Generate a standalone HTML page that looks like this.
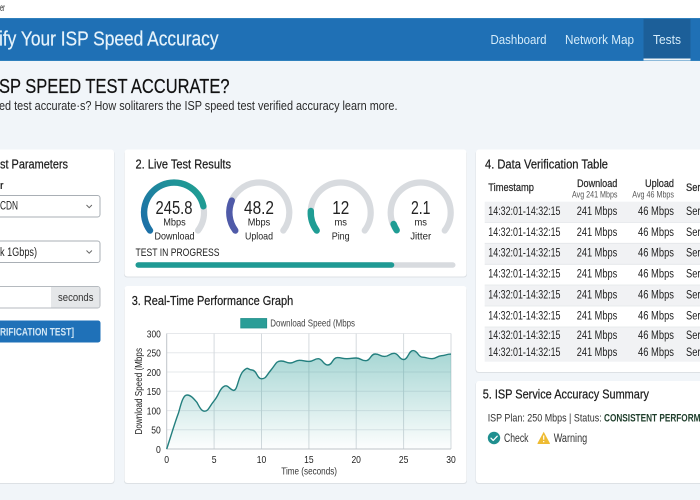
<!DOCTYPE html>
<html lang="en">
<head>
<meta charset="utf-8">
<title>Verify Your ISP Speed Accuracy</title>
<style>
html,body{margin:0;padding:0;background:#f1f5f9;width:700px;height:500px;overflow:hidden}
svg{display:block;position:absolute;left:0;top:0;filter:blur(.3px)}
text{font-family:"Liberation Sans",sans-serif;fill:#222;}
.m{stroke:currentColor;stroke-width:.22px}
</style>
</head>
<body>
<svg width="700" height="500" viewBox="0 0 700 500" xmlns="http://www.w3.org/2000/svg">
<defs>
<linearGradient id="g1" gradientUnits="userSpaceOnUse" x1="144" y1="230" x2="204" y2="195">
<stop offset="0" stop-color="#1c6ea8"/><stop offset=".6" stop-color="#1f8f9a"/><stop offset="1" stop-color="#1f9d92"/>
</linearGradient>
<linearGradient id="area" x1="0" y1="0" x2="0" y2="1">
<stop offset="0" stop-color="#2a9d97" stop-opacity=".42"/><stop offset="1" stop-color="#2a9d97" stop-opacity=".01"/>
</linearGradient>
</defs>
<rect width="700" height="500" fill="#f1f5f9"/>
<rect y="0" width="700" height="18" fill="#fff"/>
<text x="0" y="11" font-size="10.5" textLength="5" lengthAdjust="spacingAndGlyphs">er</text>

<!-- Header -->
<rect y="18" width="700" height="43" fill="#2f80bd"/>
<rect y="19" width="700" height="41" fill="#1f70b5"/>
<rect x="643.5" y="19" width="47" height="40" fill="#1c5f99"/>
<rect x="643.5" y="58.5" width="47" height="2" fill="#eef4f8"/>
<text x="-1" y="45.5" font-size="20" class="m" style="fill:#e6f3fb;color:#e6f3fb" textLength="219.5" lengthAdjust="spacingAndGlyphs">ify Your ISP Speed Accuracy</text>
<text x="490.5" y="44" font-size="13.2" style="fill:#d5ecfa" textLength="56" lengthAdjust="spacingAndGlyphs">Dashboard</text>
<text x="565" y="44" font-size="13.2" style="fill:#d5ecfa" textLength="69" lengthAdjust="spacingAndGlyphs">Network Map</text>
<text x="653" y="44" font-size="13.2" style="fill:#d5ecfa" textLength="28" lengthAdjust="spacingAndGlyphs">Tests</text>

<!-- Heading -->
<text x="-1" y="93" font-size="20" class="m" style="fill:#111;color:#111" textLength="230.5" lengthAdjust="spacingAndGlyphs">SP SPEED TEST ACCURATE?</text>
<text x="-1" y="110" font-size="12.6" style="fill:#2a2a2a" textLength="398.5" lengthAdjust="spacingAndGlyphs">ed test accurate·s? How solitarers the ISP speed test verified accuracy learn more.</text>

<!-- Card shadows -->
<g fill="#dde1e5">
<rect x="-8" y="150.5" width="122.5" height="333.5" rx="3"/>
<rect x="124" y="150.5" width="343" height="127" rx="3"/>
<rect x="124" y="287" width="343" height="197" rx="3"/>
<rect x="475.5" y="150.5" width="240" height="222.5" rx="3"/>
<rect x="475.5" y="381.5" width="240" height="102.5" rx="3"/>
</g>
<g fill="#fff">
<rect x="-8" y="149.5" width="122" height="333.5" rx="3"/>
<rect x="124.5" y="149.5" width="342" height="127" rx="3"/>
<rect x="124.5" y="286" width="342" height="197" rx="3"/>
<rect x="476" y="149.5" width="240" height="222.5" rx="3"/>
<rect x="476" y="381" width="240" height="102" rx="3"/>
</g>

<!-- Card 1 -->
<text x="0" y="168.5" font-size="12.8" class="m" style="fill:#1c1c1c;color:#1c1c1c" textLength="68" lengthAdjust="spacingAndGlyphs">st Parameters</text>
<text x="0" y="189" font-size="11" font-weight="bold" textLength="3.5" lengthAdjust="spacingAndGlyphs">r</text>
<rect x="-6" y="195.5" width="106" height="21.5" rx="2.5" fill="#fff" stroke="#a9afb5"/>
<text x="0" y="209.5" font-size="11.5" textLength="18" lengthAdjust="spacingAndGlyphs">CDN</text>
<path d="M86.5 205l2.7 2.7 2.7-2.7" fill="none" stroke="#666" stroke-width="1"/>
<rect x="-6" y="241" width="106" height="21.5" rx="2.5" fill="#fff" stroke="#a9afb5"/>
<text x="0" y="256" font-size="11.5" textLength="37" lengthAdjust="spacingAndGlyphs">k 1Gbps)</text>
<path d="M86.5 250.5l2.7 2.7 2.7-2.7" fill="none" stroke="#666" stroke-width="1"/>
<rect x="-6" y="286.5" width="106" height="21.5" rx="2.5" fill="#fff" stroke="#b5babf"/>
<path d="M51 287h46.5a2 2 0 0 1 2 2v16.5a2 2 0 0 1-2 2H51z" fill="#e5e7e9"/>
<text x="58" y="301" font-size="11" style="fill:#333" textLength="35.5" lengthAdjust="spacingAndGlyphs">seconds</text>
<rect x="-6" y="320.5" width="106.5" height="22" rx="2.5" fill="#1f71b8"/>
<text x="0" y="335.5" font-size="11" font-weight="bold" style="fill:#d3e8f6" textLength="74" lengthAdjust="spacingAndGlyphs">RIFICATION TEST]</text>

<!-- Card 2 -->
<text x="135.5" y="168.5" font-size="12.8" class="m" style="fill:#1c1c1c;color:#1c1c1c" textLength="95.5" lengthAdjust="spacingAndGlyphs">2. Live Test Results</text>
<g fill="none" stroke="#d8dbdf" stroke-width="6.2" stroke-linecap="round">
<path d="M150 230.5A30 30 0 1 1 198 230.5"/>
<path d="M235.3 230.5A30 30 0 1 1 283.3 230.5"/>
<path d="M316.7 230.5A30 30 0 1 1 364.7 230.5"/>
<path d="M396.7 230.5A30 30 0 1 1 444.7 230.5"/>
</g>
<g fill="none" stroke-width="6.4" stroke-linecap="round">
<path d="M150 230.5A30 30 0 1 1 203.4 206.3" stroke="url(#g1)"/>
<path d="M235.3 230.5A30 30 0 0 1 231.8 200.6" stroke="#4f5aa8"/>
<path d="M316.7 230.5A30 30 0 0 1 310.8 211" stroke="#1f9d94"/>
<path d="M396.7 230.2A30 30 0 0 1 393.6 224" stroke="#1f9d94"/>
</g>
<g text-anchor="middle" style="fill:#1a1a1a">
<text x="174" y="214" font-size="18.5" textLength="37" lengthAdjust="spacingAndGlyphs">245.8</text>
<text x="174.5" y="225.5" font-size="10.5" textLength="22.5" lengthAdjust="spacingAndGlyphs">Mbps</text>
<text x="174.5" y="239.5" font-size="10.5" textLength="40" lengthAdjust="spacingAndGlyphs">Download</text>
<text x="259" y="214" font-size="18.5" textLength="30" lengthAdjust="spacingAndGlyphs">48.2</text>
<text x="259" y="225.5" font-size="10.5" textLength="22.5" lengthAdjust="spacingAndGlyphs">Mbps</text>
<text x="259" y="239.5" font-size="10.5" textLength="28" lengthAdjust="spacingAndGlyphs">Upload</text>
<text x="340.7" y="214" font-size="18.5" textLength="17" lengthAdjust="spacingAndGlyphs">12</text>
<text x="340.7" y="225.5" font-size="10.5" textLength="12.5" lengthAdjust="spacingAndGlyphs">ms</text>
<text x="340.7" y="239.5" font-size="10.5" textLength="18" lengthAdjust="spacingAndGlyphs">Ping</text>
<text x="420.7" y="214" font-size="18.5" textLength="19.5" lengthAdjust="spacingAndGlyphs">2.1</text>
<text x="420.7" y="225.5" font-size="10.5" textLength="12.5" lengthAdjust="spacingAndGlyphs">ms</text>
<text x="420.7" y="239.5" font-size="10.5" textLength="21" lengthAdjust="spacingAndGlyphs">Jitter</text>
</g>
<text x="135.5" y="256" font-size="11" style="fill:#222" textLength="84" lengthAdjust="spacingAndGlyphs">TEST IN PROGRESS</text>
<rect x="135.5" y="262.3" width="320" height="5.4" rx="2.7" fill="#d8dbdf"/>
<rect x="135.5" y="262.3" width="258.8" height="5.4" rx="2.7" fill="#1f9a94"/>

<!-- Card 3 -->
<text x="131.7" y="305" font-size="12.8" class="m" style="fill:#1c1c1c;color:#1c1c1c" textLength="161.5" lengthAdjust="spacingAndGlyphs">3. Real-Time Performance Graph</text>
<rect x="240.7" y="318.5" width="26" height="9.5" fill="#2a9d97" stroke="#23908c" stroke-width=".8"/>
<text x="270.3" y="326.5" font-size="10" style="fill:#444" textLength="84.7" lengthAdjust="spacingAndGlyphs">Download Speed (Mbps</text>
<g stroke="#e6e8eb" stroke-width="1">
<path d="M166.7 333.5H451M166.7 352.8H451M166.7 372H451M166.7 391.3H451M166.7 410.6H451M166.7 429.8H451"/>
</g>
<g stroke="#d5dade" stroke-width="1">
<path d="M214.1 333.5V449M261.5 333.5V449M308.9 333.5V449M356.2 333.5V449M403.6 333.5V449M451 333.5V449"/>
</g>
<path d="M166.7 333.5V449H451" fill="none" stroke="#bfc4c9" stroke-width="1"/>
<path d="M166.7 449C170 439,175 422,178.5 413C181 404,183 395,187 395C191 395,194 399,197 402.5C199 406,201 411,204.6 411.2S209 407,214.1 400.8S219 390,223.3 386.8S229 389,233.3 390.3S238 376,243.3 371S247 369.5,252 370S257 378.8,261.5 378.8S266 376,271 370S276 361,281 361S285.5 363,290 363S295 360.3,299.4 360.3S304 361.4,308.9 361.4S314 358.7,318.3 358.7S323 365,327.8 365S332.5 357.6,337.3 357.6S342 358.7,346.8 358.7S351.5 358,356.2 358S361 360.7,365.7 360.7S370.5 354,375.2 354S380 356.4,384.7 356.4S389.5 353.3,394.1 353.3S399 359.5,403.6 359.5S408.5 350.6,413.1 350.6S418 357,422.6 357.2S427.5 358.7,432 358.7S436.8 356,441.5 355.7S446 354.1,451 354.1L451 449Z" fill="url(#area)"/>
<path d="M166.7 449C170 439,175 422,178.5 413C181 404,183 395,187 395C191 395,194 399,197 402.5C199 406,201 411,204.6 411.2S209 407,214.1 400.8S219 390,223.3 386.8S229 389,233.3 390.3S238 376,243.3 371S247 369.5,252 370S257 378.8,261.5 378.8S266 376,271 370S276 361,281 361S285.5 363,290 363S295 360.3,299.4 360.3S304 361.4,308.9 361.4S314 358.7,318.3 358.7S323 365,327.8 365S332.5 357.6,337.3 357.6S342 358.7,346.8 358.7S351.5 358,356.2 358S361 360.7,365.7 360.7S370.5 354,375.2 354S380 356.4,384.7 356.4S389.5 353.3,394.1 353.3S399 359.5,403.6 359.5S408.5 350.6,413.1 350.6S418 357,422.6 357.2S427.5 358.7,432 358.7S436.8 356,441.5 355.7S446 354.1,451 354.1" fill="none" stroke="#237f7e" stroke-width="1.4"/>
<g font-size="10.5" style="fill:#333">
<text x="146.8" y="337.3" textLength="14" lengthAdjust="spacingAndGlyphs">300</text><text x="146.8" y="356.6" textLength="14" lengthAdjust="spacingAndGlyphs">250</text><text x="146.8" y="375.8" textLength="14" lengthAdjust="spacingAndGlyphs">200</text><text x="146.8" y="395.1" textLength="14" lengthAdjust="spacingAndGlyphs">150</text><text x="146.8" y="414.3" textLength="14" lengthAdjust="spacingAndGlyphs">100</text><text x="151.3" y="433.6" textLength="9.5" lengthAdjust="spacingAndGlyphs">50</text><text x="156" y="452.8" textLength="4.8" lengthAdjust="spacingAndGlyphs">0</text>
</g>
<g font-size="10.5" text-anchor="middle" style="fill:#333">
<text x="166.7" y="463" textLength="4.8" lengthAdjust="spacingAndGlyphs">0</text><text x="214.1" y="463" textLength="4.8" lengthAdjust="spacingAndGlyphs">5</text><text x="261.5" y="463" textLength="9.5" lengthAdjust="spacingAndGlyphs">10</text><text x="308.9" y="463" textLength="9.5" lengthAdjust="spacingAndGlyphs">15</text><text x="356.2" y="463" textLength="9.5" lengthAdjust="spacingAndGlyphs">20</text><text x="403.6" y="463" textLength="9.5" lengthAdjust="spacingAndGlyphs">25</text><text x="451" y="463" textLength="9.5" lengthAdjust="spacingAndGlyphs">30</text>
</g>
<text x="281.3" y="474.6" font-size="10.5" style="fill:#333" textLength="55.7" lengthAdjust="spacingAndGlyphs">Time (seconds)</text>
<text transform="translate(142.2 434.5) rotate(-90)" font-size="10.5" style="fill:#222" textLength="86.5" lengthAdjust="spacingAndGlyphs">Download Speed (Mbps</text>

<!-- Card 4 -->
<text x="485" y="168.5" font-size="12.8" class="m" style="fill:#1c1c1c;color:#1c1c1c" textLength="123" lengthAdjust="spacingAndGlyphs">4. Data Verification Table</text>
<g font-size="11" class="m" style="fill:#333;color:#333">
<text x="488.3" y="191" textLength="45.7" lengthAdjust="spacingAndGlyphs">Timestamp</text>
<text x="577" y="187" textLength="40.3" lengthAdjust="spacingAndGlyphs">Download</text>
<text x="645" y="187" textLength="29" lengthAdjust="spacingAndGlyphs">Upload</text>
<text x="686" y="191" textLength="14.5" lengthAdjust="spacingAndGlyphs">Ser</text>
</g>
<text x="572" y="197.3" font-size="8.8" style="fill:#555" textLength="45.5" lengthAdjust="spacingAndGlyphs">Avg 241 Mbps</text>
<text x="632.3" y="197.3" font-size="8.8" style="fill:#555" textLength="41.7" lengthAdjust="spacingAndGlyphs">Avg 46 Mbps</text>
<g fill="#f1f2f4">
<rect x="484.7" y="201.7" width="216" height="20.6"/>
<rect x="484.7" y="243.3" width="216" height="21"/>
<rect x="484.7" y="285" width="216" height="21"/>
<rect x="484.7" y="327" width="216" height="34.7"/>
</g>
<g stroke="#e4e6e9" stroke-width=".8">
<path d="M484.7 222.5H700M484.7 243.3H700M484.7 264.3H700M484.7 285H700M484.7 306H700M484.7 327H700"/>
</g>
<g font-size="11.5" style="fill:#333">
<text x="488.3" y="215" textLength="72.2" lengthAdjust="spacingAndGlyphs">14:32:01-14:32:15</text><text x="576.7" y="215" textLength="40.5" lengthAdjust="spacingAndGlyphs">241 Mbps</text><text x="638" y="215" textLength="36" lengthAdjust="spacingAndGlyphs">46 Mbps</text><text x="686" y="215" textLength="14.5" lengthAdjust="spacingAndGlyphs">Ser</text>
<text x="488.3" y="235.8" textLength="72.2" lengthAdjust="spacingAndGlyphs">14:32:01-14:32:15</text><text x="576.7" y="235.8" textLength="40.5" lengthAdjust="spacingAndGlyphs">241 Mbps</text><text x="638" y="235.8" textLength="36" lengthAdjust="spacingAndGlyphs">46 Mbps</text><text x="686" y="235.8" textLength="14.5" lengthAdjust="spacingAndGlyphs">Ser</text>
<text x="488.3" y="256.7" textLength="72.2" lengthAdjust="spacingAndGlyphs">14:32:01-14:32:15</text><text x="576.7" y="256.7" textLength="40.5" lengthAdjust="spacingAndGlyphs">241 Mbps</text><text x="638" y="256.7" textLength="36" lengthAdjust="spacingAndGlyphs">46 Mbps</text><text x="686" y="256.7" textLength="14.5" lengthAdjust="spacingAndGlyphs">Ser</text>
<text x="488.3" y="277.5" textLength="72.2" lengthAdjust="spacingAndGlyphs">14:32:01-14:32:15</text><text x="576.7" y="277.5" textLength="40.5" lengthAdjust="spacingAndGlyphs">241 Mbps</text><text x="638" y="277.5" textLength="36" lengthAdjust="spacingAndGlyphs">46 Mbps</text><text x="686" y="277.5" textLength="14.5" lengthAdjust="spacingAndGlyphs">Ser</text>
<text x="488.3" y="298.4" textLength="72.2" lengthAdjust="spacingAndGlyphs">14:32:01-14:32:15</text><text x="576.7" y="298.4" textLength="40.5" lengthAdjust="spacingAndGlyphs">241 Mbps</text><text x="638" y="298.4" textLength="36" lengthAdjust="spacingAndGlyphs">46 Mbps</text><text x="686" y="298.4" textLength="14.5" lengthAdjust="spacingAndGlyphs">Ser</text>
<text x="488.3" y="319.3" textLength="72.2" lengthAdjust="spacingAndGlyphs">14:32:01-14:32:15</text><text x="576.7" y="319.3" textLength="40.5" lengthAdjust="spacingAndGlyphs">241 Mbps</text><text x="638" y="319.3" textLength="36" lengthAdjust="spacingAndGlyphs">46 Mbps</text><text x="686" y="319.3" textLength="14.5" lengthAdjust="spacingAndGlyphs">Ser</text>
<text x="488.3" y="339" textLength="72.2" lengthAdjust="spacingAndGlyphs">14:32:01-14:32:15</text><text x="576.7" y="339" textLength="40.5" lengthAdjust="spacingAndGlyphs">241 Mbps</text><text x="638" y="339" textLength="36" lengthAdjust="spacingAndGlyphs">46 Mbps</text><text x="686" y="339" textLength="14.5" lengthAdjust="spacingAndGlyphs">Ser</text>
<text x="488.3" y="356" textLength="72.2" lengthAdjust="spacingAndGlyphs">14:32:01-14:32:15</text><text x="576.7" y="356" textLength="40.5" lengthAdjust="spacingAndGlyphs">241 Mbps</text><text x="638" y="356" textLength="36" lengthAdjust="spacingAndGlyphs">46 Mbps</text><text x="686" y="356" textLength="14.5" lengthAdjust="spacingAndGlyphs">Ser</text>
</g>

<!-- Card 5 -->
<text x="482.7" y="398.3" font-size="12.8" class="m" style="fill:#1c1c1c;color:#1c1c1c" textLength="166.3" lengthAdjust="spacingAndGlyphs">5. ISP Service Accuracy Summary</text>
<text x="487.7" y="421.7" font-size="11" style="fill:#333" textLength="114" lengthAdjust="spacingAndGlyphs">ISP Plan: 250 Mbps | Status:</text>
<text x="604" y="421.7" font-size="11" font-weight="bold" style="fill:#1d3d2a" textLength="96.5" lengthAdjust="spacingAndGlyphs">CONSISTENT PERFORM</text>
<circle cx="494" cy="438" r="6.2" fill="#1f8f8f"/>
<path d="M491 438.2l2.2 2.2 4-4.2" fill="none" stroke="#fff" stroke-width="1.3" stroke-linecap="round" stroke-linejoin="round"/>
<text x="504" y="442" font-size="11.5" style="fill:#333" textLength="24.5" lengthAdjust="spacingAndGlyphs">Check</text>
<path d="M543.7 431.7l6.2 11.6a.5.5 0 0 1-.4.7h-11.6a.5.5 0 0 1-.4-.7z" fill="#eebb33"/>
<path d="M543.7 435.5v4.2M543.7 441v1.2" stroke="#fff" stroke-width="1.2"/>
<text x="553.7" y="442" font-size="11.5" style="fill:#333" textLength="33.5" lengthAdjust="spacingAndGlyphs">Warning</text>
</svg>
</body>
</html>
